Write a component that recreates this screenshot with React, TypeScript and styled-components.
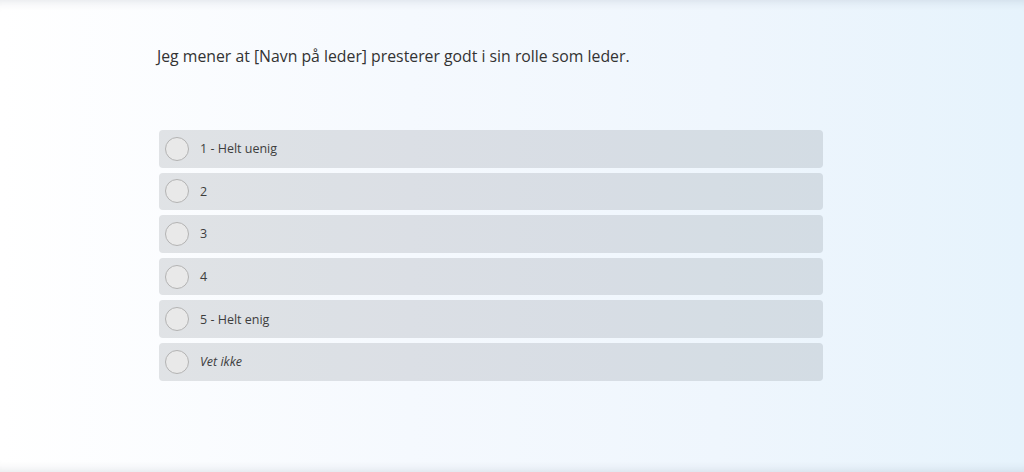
import React from "react";
import styled, { createGlobalStyle } from "styled-components";

const GlobalStyle = createGlobalStyle`
  html, body {
    margin: 0;
    padding: 0;
  }
  body {
    font-family: "Open Sans", "Noto Sans", sans-serif;
    color: #333;
  }
`;

const Page = styled.div`
  height: 472px;
  box-sizing: border-box;
  padding: 45px 0 0 157px;
  background: linear-gradient(90deg, #ffffff 0%, #f5f9fe 40%, #eff6fd 70%, #e6f3fc 100%);
  box-shadow: inset 0 10px 10px -8px rgba(0, 30, 60, 0.1),
    inset 0 -10px 10px -8px rgba(0, 30, 60, 0.1);
`;

const Question = styled.div`
  font-size: 15.8px;
  line-height: 22px;
  color: #333;
  margin: 0 0 63px;
`;

const Options = styled.div`
  display: flex;
  flex-direction: column;
  gap: 5px;
  width: 664px;
  margin-left: 2px;
`;

const Option = styled.label`
  display: flex;
  align-items: center;
  height: 37.6px;
  padding-left: 6px;
  gap: 11px;
  border-radius: 4px;
  background: rgba(10, 20, 30, 0.11);
  cursor: pointer;
`;

const Radio = styled.span`
  width: 22px;
  height: 22px;
  border-radius: 50%;
  border: 1.5px solid #b3b3b3;
  background: #e9e9e9;
  flex: none;
`;

const Label = styled.span<{ $italic?: boolean }>`
  font-size: 12.5px;
  color: #3d3d3d;
  font-style: ${({ $italic }) => ($italic ? "italic" : "normal")};
`;

const options = [
  { text: "1 - Helt uenig" },
  { text: "2" },
  { text: "3" },
  { text: "4" },
  { text: "5 - Helt enig" },
  { text: "Vet ikke", italic: true },
];

export default function App() {
  return (
    <>
      <GlobalStyle />
      <Page>
        <Question>Jeg mener at [Navn på leder] presterer godt i sin rolle som leder.</Question>
        <Options>
          {options.map((o) => (
            <Option key={o.text}>
              <Radio />
              <Label $italic={o.italic}>{o.text}</Label>
            </Option>
          ))}
        </Options>
      </Page>
    </>
  );
}
